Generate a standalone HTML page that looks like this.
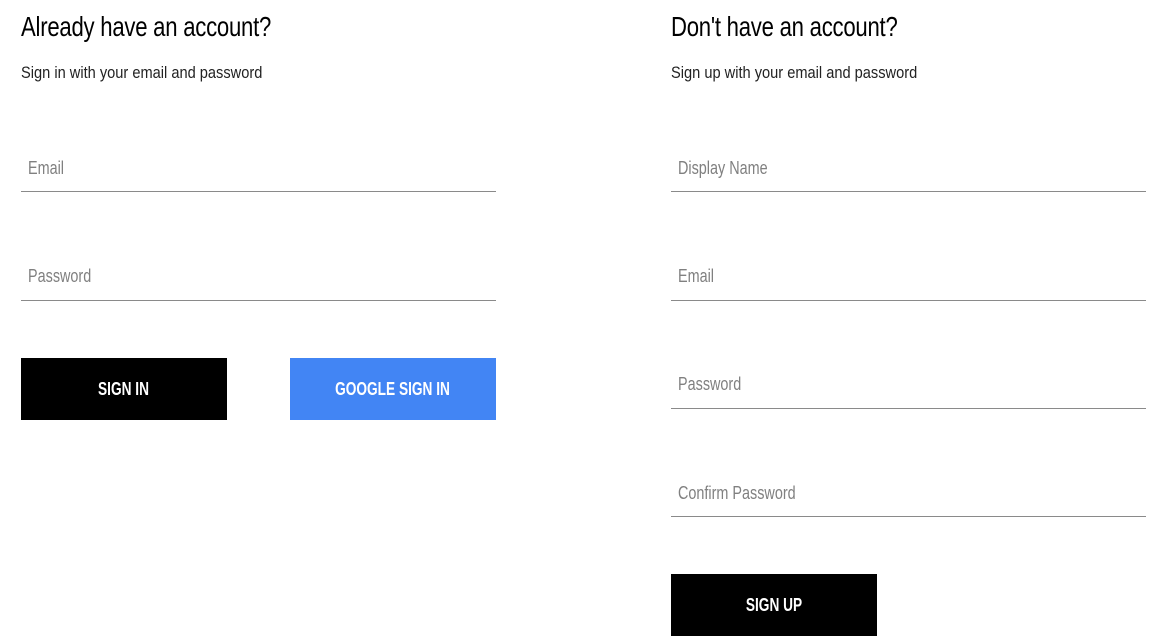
<!DOCTYPE html>
<html><head><meta charset="utf-8"><style>
*{margin:0;padding:0;box-sizing:border-box}
body{width:1159px;height:643px;background:#fff;font-family:"Liberation Sans",sans-serif;color:#000;position:relative;overflow:hidden}
.col{position:absolute;top:0;width:475px}
h2{position:absolute;top:11px;left:0;font-size:28px;font-weight:normal;white-space:nowrap;transform:scaleX(0.79);transform-origin:left top;letter-spacing:-0.3px}
.sub{position:absolute;top:63px;left:0;font-size:17px;color:#222;white-space:nowrap;transform:scaleX(0.86);transform-origin:left top}
.f{position:absolute;left:0;width:475px;border-bottom:1px solid #8a8a8a;height:1px}
.lbl{position:absolute;left:7px;font-size:18px;color:#808080;white-space:nowrap;transform:scaleX(0.8);transform-origin:left top}
.btn{position:absolute;width:206px;height:62px;background:#000;color:#fff;font-weight:bold;font-size:18px;display:flex;align-items:center;justify-content:center}
.btn span{display:inline-block;transform:scaleX(0.76)}
</style></head><body>
<div class="col" style="left:21px">
<h2>Already have an account?</h2>
<div class="sub">Sign in with your email and password</div>
<div class="lbl" style="top:158px">Email</div><div class="f" style="top:191px"></div>
<div class="lbl" style="top:266px">Password</div><div class="f" style="top:300px"></div>
<div class="btn" style="top:358px;left:0"><span>SIGN IN</span></div>
<div class="btn" style="top:358px;left:269px;background:#4285f4"><span>GOOGLE SIGN IN</span></div>
</div>
<div class="col" style="left:671px">
<h2>Don't have an account?</h2>
<div class="sub">Sign up with your email and password</div>
<div class="lbl" style="top:158px">Display Name</div><div class="f" style="top:191px"></div>
<div class="lbl" style="top:266px">Email</div><div class="f" style="top:300px"></div>
<div class="lbl" style="top:374px">Password</div><div class="f" style="top:408px"></div>
<div class="lbl" style="top:483px">Confirm Password</div><div class="f" style="top:516px"></div>
<div class="btn" style="top:574px;left:0"><span>SIGN UP</span></div>
</div>
</body></html>
